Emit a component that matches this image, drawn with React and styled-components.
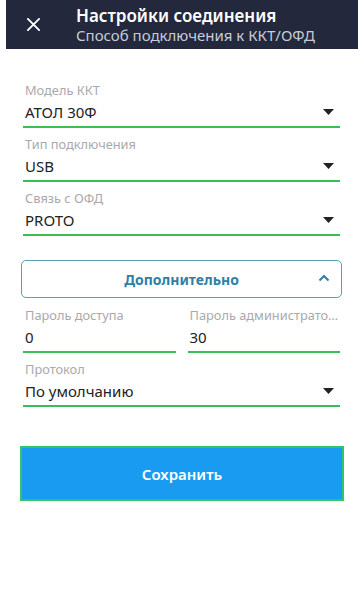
import React from 'react';
import styled, { createGlobalStyle } from 'styled-components';

const GlobalStyle = createGlobalStyle`
    body {
        margin: 0;
        background: #ffffff;
        font-family: "Noto Sans", "Open Sans", sans-serif;
    }
`;

function Caret() {
    return (
        <svg width="11" height="6" viewBox="0 0 11 6">
            <path d="M0 0 L11 0 L5.5 6 Z" fill="#222222" />
        </svg>
    );
}

function SelectField({ label, value }) {
    return (
        <Field>
            <Label>{label}</Label>
            <ValueRow>
                <Value>{value}</Value>
                <Caret />
            </ValueRow>
        </Field>
    );
}

function InputField({ label, value }) {
    return (
        <Field>
            <Label>{label}</Label>
            <ValueRow>
                <Value>{value}</Value>
            </ValueRow>
        </Field>
    );
}

function App() {
    return (
        <Page>
            <GlobalStyle />
            <Header>
                <CloseButton>
                    <svg width="15" height="15" viewBox="0 0 16 16">
                        <path d="M2 2 L14 14 M14 2 L2 14" stroke="#ffffff" strokeWidth="2" strokeLinecap="round" />
                    </svg>
                </CloseButton>
                <Titles>
                    <Title>Настройки соединения</Title>
                    <SubTitle>Способ подключения к ККТ/ОФД</SubTitle>
                </Titles>
            </Header>
            <Form>
                <SelectField label="Модель ККТ" value="АТОЛ 30Ф" />
                <SelectField label="Тип подключения" value="USB" />
                <SelectField label="Связь с ОФД" value="PROTO" />
                <ToggleButton>
                    <span>Дополнительно</span>
                    <Chevron>
                        <svg width="12" height="8" viewBox="0 0 12 8">
                            <path d="M1.5 6.5 L6 2 L10.5 6.5" fill="none" stroke="#3a7fa3" strokeWidth="2.2" />
                        </svg>
                    </Chevron>
                </ToggleButton>
                <Pair>
                    <InputField label="Пароль доступа" value="0" />
                    <InputField label="Пароль администратора" value="30" />
                </Pair>
                <SelectField label="Протокол" value="По умолчанию" />
                <SaveButton>Сохранить</SaveButton>
            </Form>
        </Page>
    );
}

export default App;

const Page = styled.div`
    width: 364px;
    min-height: 599px;
    background: #ffffff;
`;

const Header = styled.div`
    margin: 0 6px;
    height: 49px;
    background: #23283d;
    display: flex;
    align-items: center;
`;

const CloseButton = styled.div`
    width: 70px;
    display: flex;
    align-items: center;
    padding-left: 20px;
    box-sizing: border-box;
    svg {
        display: block;
    }
`;

const Titles = styled.div`
    display: flex;
    flex-direction: column;
    min-width: 0;
`;

const Title = styled.span`
    color: #ffffff;
    font-size: 17px;
    font-weight: 600;
    line-height: 21px;
    white-space: nowrap;
`;

const SubTitle = styled.span`
    color: #c9ccd6;
    font-size: 15px;
    line-height: 19px;
    white-space: nowrap;
`;

const Form = styled.div`
    padding: 33px 24px 0 23px;
    display: flex;
    flex-direction: column;
`;

const Field = styled.div`
    display: flex;
    flex-direction: column;
    min-width: 0;
    margin-bottom: 8px;
`;

const Label = styled.span`
    color: #a9a9ad;
    font-size: 12.8px;
    line-height: 16px;
    height: 16px;
    padding-left: 2px;
    white-space: nowrap;
    overflow: hidden;
    text-overflow: ellipsis;
`;

const ValueRow = styled.div`
    display: flex;
    align-items: center;
    justify-content: space-between;
    padding: 4px 6px 4px 2px;
    border-bottom: 2px solid #3dbd57;
    svg {
        display: block;
    }
`;

const Value = styled.span`
    color: #222222;
    font-size: 15px;
    line-height: 20px;
`;

const ToggleButton = styled.div`
    margin: 16px -2px 9px -2px;
    height: 36px;
    border: 1px solid #5b9fb5;
    border-radius: 5px;
    position: relative;
    display: flex;
    align-items: center;
    justify-content: center;
    color: #2f7fa8;
    font-size: 14px;
    font-weight: 700;
`;

const Chevron = styled.div`
    position: absolute;
    right: 11px;
    top: 13px;
    svg {
        display: block;
    }
`;

const Pair = styled.div`
    display: grid;
    grid-template-columns: 1fr 1fr;
    column-gap: 12px;
`;

const SaveButton = styled.div`
    margin: 31px -4px 0 -3px;
    height: 51px;
    background: #1a9bf2;
    border: 2px solid #33c46a;
    display: flex;
    align-items: center;
    justify-content: center;
    color: #ffffff;
    font-size: 15px;
    font-weight: 600;
`;
